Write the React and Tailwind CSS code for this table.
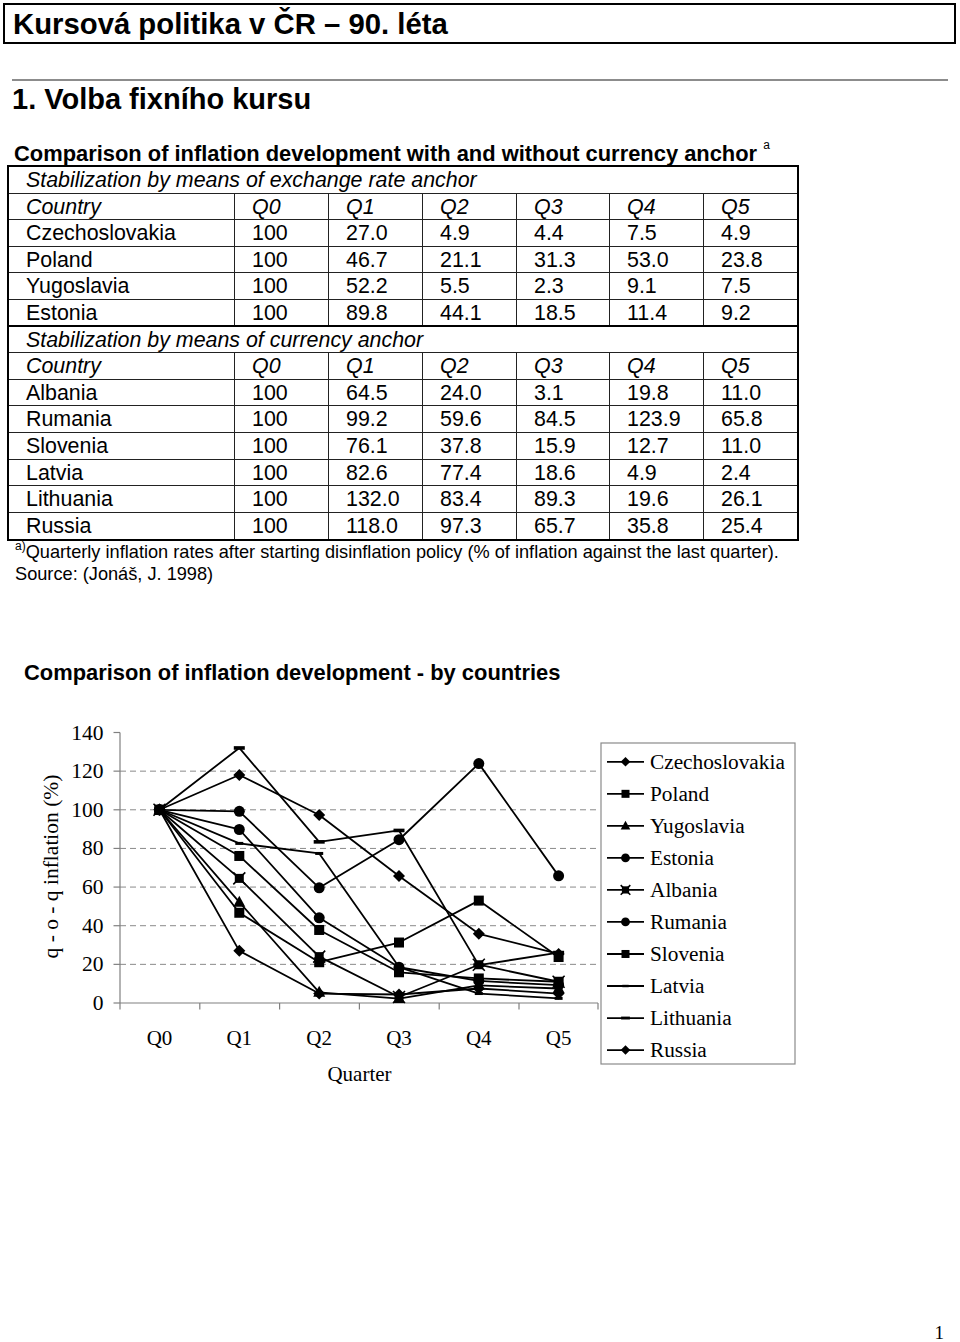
import React from "react";

const xs = [159.5, 239.3, 319.2, 399, 478.8, 558.6];
const yv = (v) => 1003 - (v * 270.5) / 140;

const series = [
  { name: "Czechoslovakia", m: "diamond", d: [100, 27.0, 4.9, 4.4, 7.5, 4.9] },
  { name: "Poland", m: "square", d: [100, 46.7, 21.1, 31.3, 53.0, 23.8] },
  { name: "Yugoslavia", m: "triangle", d: [100, 52.2, 5.5, 2.3, 9.1, 7.5] },
  { name: "Estonia", m: "circle", d: [100, 89.8, 44.1, 18.5, 11.4, 9.2] },
  { name: "Albania", m: "star", d: [100, 64.5, 24.0, 3.1, 19.8, 11.0] },
  { name: "Rumania", m: "circle", d: [100, 99.2, 59.6, 84.5, 123.9, 65.8] },
  { name: "Slovenia", m: "square", d: [100, 76.1, 37.8, 15.9, 12.7, 11.0] },
  { name: "Latvia", m: "dash", d: [100, 82.6, 77.4, 18.6, 4.9, 2.4] },
  { name: "Lithuania", m: "bar", d: [100, 132.0, 83.4, 89.3, 19.6, 26.1] },
  { name: "Russia", m: "diamond", d: [100, 118.0, 97.3, 65.7, 35.8, 25.4] },
];

function Marker({ x, y, t, s = 1 }) {
  const k = (n) => n * s;
  switch (t) {
    case "diamond":
      return (
        <polygon
          points={`${x},${y - k(6)} ${x + k(6)},${y} ${x},${y + k(6)} ${x - k(6)},${y}`}
          fill="#000"
        />
      );
    case "square":
      return <rect x={x - k(5)} y={y - k(5)} width={k(10)} height={k(10)} fill="#000" />;
    case "triangle":
      return (
        <polygon
          points={`${x},${y - k(6.5)} ${x + k(6)},${y + k(4.5)} ${x - k(6)},${y + k(4.5)}`}
          fill="#000"
        />
      );
    case "circle":
      return <circle cx={x} cy={y} r={k(5.5)} fill="#000" />;
    case "star":
      return (
        <g>
          <rect x={x - k(4.5)} y={y - k(4.5)} width={k(9)} height={k(9)} fill="#000" />
          <path
            d={`M${x - k(6)} ${y - k(6)} L${x + k(6)} ${y + k(6)} M${x + k(6)} ${y - k(6)} L${x - k(6)} ${y + k(6)}`}
            stroke="#000"
            strokeWidth={1.6}
          />
        </g>
      );
    case "dash":
      return <rect x={x - k(4)} y={y - k(1.5)} width={k(8)} height={k(3)} fill="#000" />;
    case "bar":
      return <rect x={x - k(5.5)} y={y - k(1.8)} width={k(11)} height={k(3.6)} fill="#000" />;
    default:
      return null;
  }
}

function Chart() {
  const grid = [20, 40, 60, 80, 100, 120];
  const labels = [0, 20, 40, 60, 80, 100, 120, 140];
  const xt = [120, 199.8, 279.6, 359.4, 439.2, 519, 598];
  const serif = "'Liberation Serif', 'Times New Roman', serif";
  return (
    <svg width="960" height="420" viewBox="0 683 960 420" className="block">
      {grid.map((v) => (
        <line
          key={v}
          x1={120}
          x2={598}
          y1={yv(v)}
          y2={yv(v)}
          stroke="#8a8a8a"
          strokeWidth={1}
          strokeDasharray="6 4"
        />
      ))}
      <line x1={120} x2={120} y1={732.5} y2={1003} stroke="#808080" strokeWidth={1.2} />
      <line x1={120} x2={598} y1={1003} y2={1003} stroke="#808080" strokeWidth={1.2} />
      {labels.map((v) => (
        <line key={v} x1={113.5} x2={120} y1={yv(v)} y2={yv(v)} stroke="#808080" strokeWidth={1.2} />
      ))}
      {xt.map((x) => (
        <line key={x} x1={x} x2={x} y1={1003} y2={1009.5} stroke="#808080" strokeWidth={1.2} />
      ))}
      {labels.map((v) => (
        <text
          key={v}
          x={103.5}
          y={yv(v) + 7}
          textAnchor="end"
          fontFamily={serif}
          fontSize="21.5"
          fill="#000"
        >
          {v}
        </text>
      ))}
      {xs.map((x, i) => (
        <text key={i} x={x} y={1045} textAnchor="middle" fontFamily={serif} fontSize="21" fill="#000">
          {"Q" + i}
        </text>
      ))}
      <text x={359.5} y={1081} textAnchor="middle" fontFamily={serif} fontSize="21" fill="#000">
        Quarter
      </text>
      <text
        transform="translate(58,866.5) rotate(-90)"
        textAnchor="middle"
        fontFamily={serif}
        fontSize="21.5"
        fill="#000"
      >
        q - o - q inflation (%)
      </text>

      {series.map((s) => (
        <g key={s.name}>
          <polyline
            points={s.d.map((v, i) => `${xs[i]},${yv(v)}`).join(" ")}
            fill="none"
            stroke="#000"
            strokeWidth={1.8}
            strokeLinejoin="round"
          />
          {s.d.map((v, i) => (
            <Marker key={i} x={xs[i]} y={yv(v)} t={s.m} />
          ))}
        </g>
      ))}

      <rect x={601} y={743} width={194} height={321} fill="#fff" stroke="#8a8a8a" strokeWidth={1.2} />
      {series.map((s, i) => {
        const cy = 761.8 + i * 32.03;
        return (
          <g key={s.name}>
            <line x1={607} x2={644} y1={cy} y2={cy} stroke="#000" strokeWidth={1.8} />
            <Marker x={625.5} y={cy} t={s.m} s={0.8} />
            <text x={650} y={cy + 7} fontFamily={serif} fontSize="21.3" fill="#000">
              {s.name}
            </text>
          </g>
        );
      })}
    </svg>
  );
}

const cols = "grid grid-cols-[225px_94px_94px_94px_93px_94px_1fr]";

function Row({ cells, italic, border }) {
  const b =
    border === "thick"
      ? "border-b-2 border-black"
      : border === "none"
      ? ""
      : "border-b border-[#222]";
  return (
    <div className={`${cols} h-[26.6px] ${b}`}>
      {cells.map((c, i) => (
        <div
          key={i}
          className={`flex items-center pl-[17px] pt-[2px] leading-none ${i > 0 ? "border-l border-[#222]" : ""} ${
            italic ? "italic" : ""
          }`}
        >
          {c}
        </div>
      ))}
    </div>
  );
}

function Section({ text }) {
  return (
    <div className="h-[26.6px] flex items-center pl-[17px] pt-[2px] italic leading-none border-b border-[#222]">
      {text}
    </div>
  );
}

const head = ["Country", "Q0", "Q1", "Q2", "Q3", "Q4", "Q5"];
const group1 = [
  ["Czechoslovakia", "100", "27.0", "4.9", "4.4", "7.5", "4.9"],
  ["Poland", "100", "46.7", "21.1", "31.3", "53.0", "23.8"],
  ["Yugoslavia", "100", "52.2", "5.5", "2.3", "9.1", "7.5"],
  ["Estonia", "100", "89.8", "44.1", "18.5", "11.4", "9.2"],
];
const group2 = [
  ["Albania", "100", "64.5", "24.0", "3.1", "19.8", "11.0"],
  ["Rumania", "100", "99.2", "59.6", "84.5", "123.9", "65.8"],
  ["Slovenia", "100", "76.1", "37.8", "15.9", "12.7", "11.0"],
  ["Latvia", "100", "82.6", "77.4", "18.6", "4.9", "2.4"],
  ["Lithuania", "100", "132.0", "83.4", "89.3", "19.6", "26.1"],
  ["Russia", "100", "118.0", "97.3", "65.7", "35.8", "25.4"],
];

export default function App() {
  return (
    <div className="w-[960px] bg-white text-black pt-[3px] font-['Liberation_Sans',Arial,sans-serif]">
      <div className="ml-[3px] w-[953px] h-[41px] border-2 border-black flex items-center pl-[8px] text-[29.3px] font-bold leading-none">
        Kursová politika v ČR – 90. léta
      </div>
      <div className="mt-[35px] ml-[12px] w-[936px] h-[2px] bg-[#8c8c8c]" />
      <div className="mt-[4px] h-[29px] pl-[12px] text-[29px] font-bold leading-none">1. Volba fixního kursu</div>
      <div className="mt-[29px] h-[22px] pl-[14px] text-[21.9px] font-bold leading-none whitespace-nowrap">
        Comparison of inflation development with and without currency anchor{" "}
        <span className="relative -top-[12px] text-[12px] font-normal leading-none">a</span>
      </div>
      <div className="ml-[7px] w-[792px] border-2 border-black text-[21.4px]">
        <Section text="Stabilization by means of exchange rate anchor" />
        <Row cells={head} italic />
        {group1.map((r, i) => (
          <Row key={r[0]} cells={r} border={i === group1.length - 1 ? "thick" : undefined} />
        ))}
        <Section text="Stabilization by means of currency anchor" />
        <Row cells={head} italic />
        {group2.map((r, i) => (
          <Row key={r[0]} cells={r} border={i === group2.length - 1 ? "none" : undefined} />
        ))}
      </div>
      <div className="mt-[1px] pl-[15px] text-[18.2px] leading-[21.5px]">
        <div className="whitespace-nowrap">
          <span className="relative -top-[8px] text-[12px] leading-none">a)</span>
          Quarterly inflation rates after starting disinflation policy (% of inflation against the last quarter).
        </div>
        <div>Source: (Jonáš, J. 1998)</div>
      </div>
      <div className="mt-[76.5px] h-[21.5px] pl-[24px] text-[21.9px] font-bold leading-none">
        Comparison of inflation development - by countries
      </div>
      <Chart />
      <div className="mt-[220px] pr-[16px] text-right text-[19px] leading-none font-['Liberation_Serif','Times_New_Roman',serif]">
        1
      </div>
    </div>
  );
}
